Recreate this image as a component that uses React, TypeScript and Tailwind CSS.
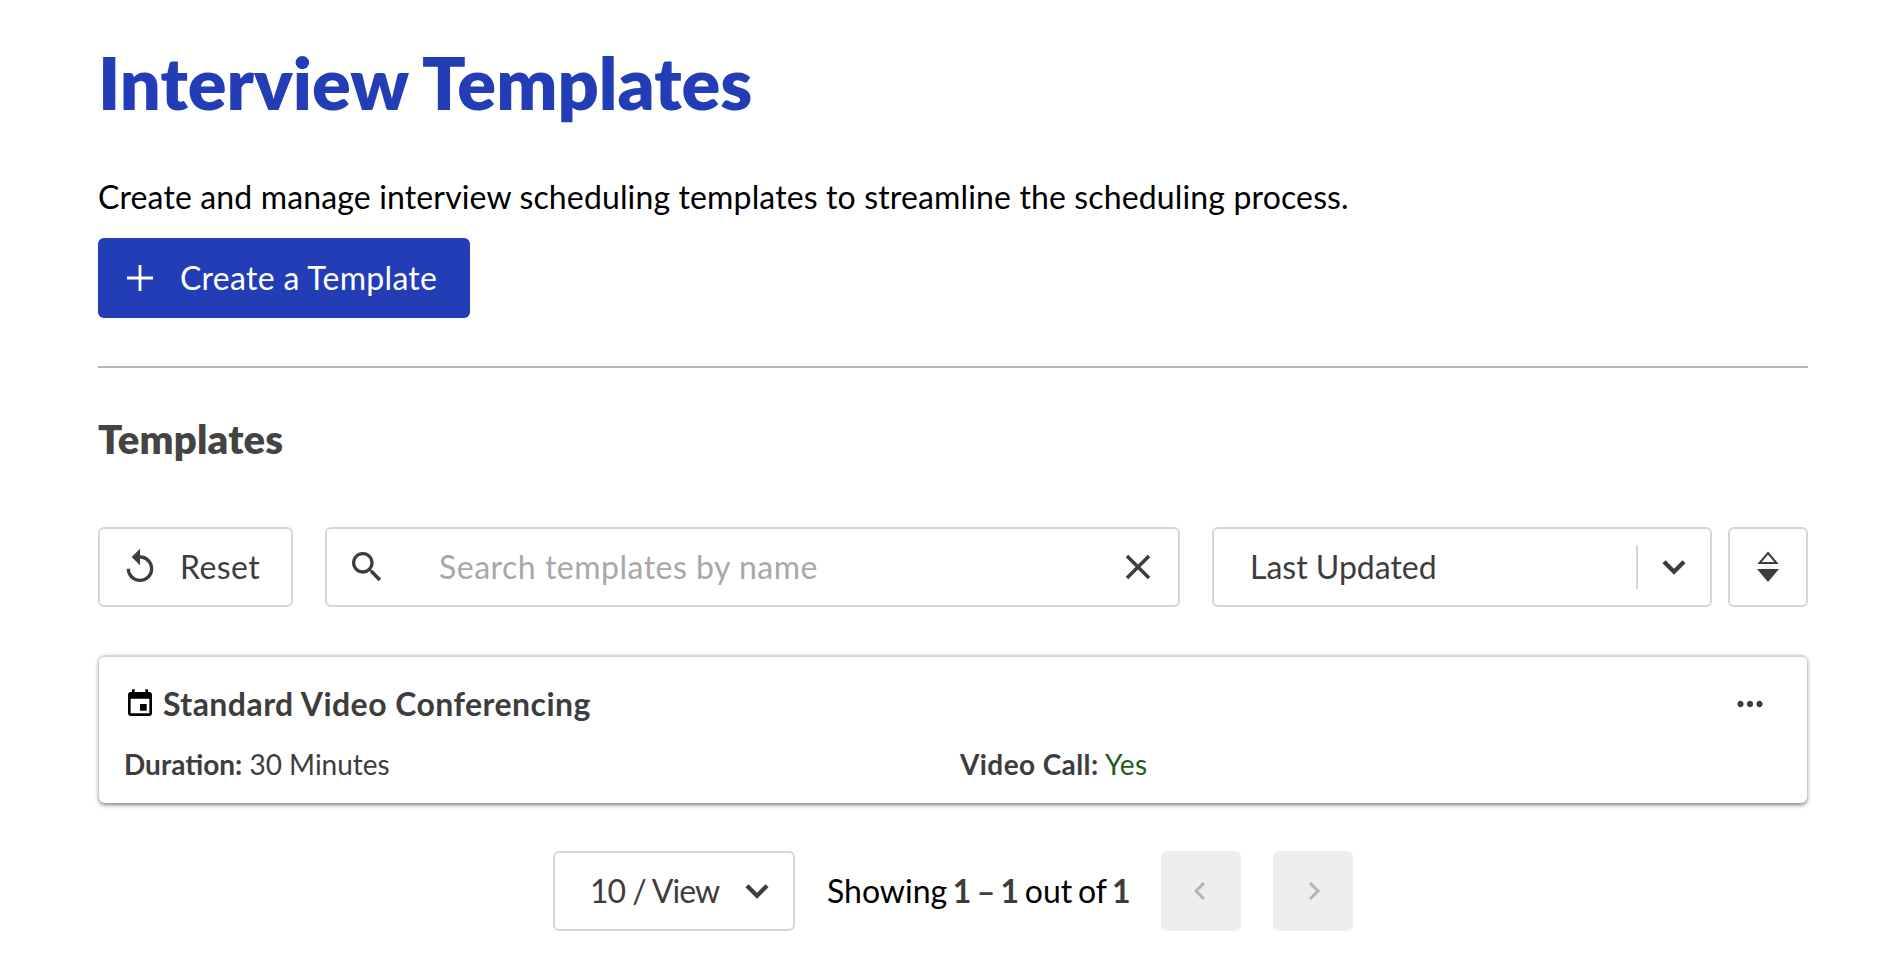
const P = ({ d, className }: { d: string; className: string }) => (
  <svg viewBox="0 0 24 24" fill="currentColor" className={className}><path d={d} /></svg>
);
const Chevron = ({ className }: { className: string }) => (
  <svg viewBox="0 0 24 24" fill="none" stroke="currentColor" strokeWidth="3.2" className={className}><path d="M4.5 8 12 15.5 19.5 8" /></svg>
);

export default function App() {
  return (
    <div className="h-[960px] overflow-hidden bg-white pl-[98px] pr-[80px] pt-[40px] font-['Lato',sans-serif] text-[#3d3d3d]">
      <h1 className="text-[72px] leading-[84px] font-extrabold text-[#233db7]">Interview Templates</h1>
      <p className="mt-[52px] text-[32px] leading-[42px] tracking-[0.14px] text-black">Create and manage interview scheduling templates to streamline the scheduling process.</p>
      <button className="mt-[20px] flex h-[80px] w-[372px] items-center rounded-[6px] bg-[#233db7] pl-[29px] text-[32px] tracking-[0.3px] text-white">
        <svg viewBox="0 0 26 26" fill="none" stroke="currentColor" strokeWidth="2.8" className="h-[26px] w-[26px]"><path d="M13 0v26M0 13h26" /></svg>
        <span className="ml-[27px]">Create a Template</span>
      </button>
      <div className="mt-[48px] h-[2px] bg-[#b5b5b5]" />
      <h2 className="mt-[47px] text-[40px] leading-[48px] font-extrabold tracking-[0.2px] text-[#444444]">Templates</h2>
      <div className="mt-[64px] flex h-[80px] items-stretch">
        <button className="flex w-[195px] items-center rounded-[6px] border-2 border-[#d6d6d6] pl-[20px] text-[32px] tracking-[0.4px]">
          <P d="M12 5V1L7 6l5 5V7c3.31 0 6 2.69 6 6s-2.69 6-6 6-6-2.69-6-6H4c0 4.42 3.58 8 8 8s8-3.58 8-8-3.58-8-8-8z" className="h-[40px] w-[40px]" />
          <span className="ml-[20px]">Reset</span>
        </button>
        <div className="ml-[32px] flex w-[855px] items-center rounded-[6px] border-2 border-[#d6d6d6] pl-[20px] pr-[19px] text-[32px]">
          <P d="M15.5 14h-.79l-.28-.27C15.41 12.59 16 11.11 16 9.5 16 5.91 13.09 3 9.5 3S3 5.91 3 9.5 5.91 16 9.5 16c1.61 0 3.09-.59 4.23-1.57l.27.28v.79l5 4.99L20.49 19l-4.99-5zm-6 0C7.01 14 5 11.99 5 9.5S7.01 5 9.5 5 14 7.01 14 9.5 11.99 14 9.5 14z" className="h-[40px] w-[40px]" />
          <span className="ml-[52px] flex-1 tracking-[0.5px] text-[#a8a8a8]">Search templates by name</span>
          <P d="M19 6.41L17.59 5 12 10.59 6.41 5 5 6.41 10.59 12 5 17.59 6.41 19 12 13.41 17.59 19 19 17.59 13.41 12z" className="h-[42px] w-[42px]" />
        </div>
        <div className="ml-[32px] flex w-[500px] items-center rounded-[6px] border-2 border-[#d6d6d6] pl-[36px] pr-[20px] text-[32px]">
          <span className="flex-1">Last Updated</span>
          <div className="mr-[20px] h-[44px] w-[2px] bg-[#d6d6d6]" />
          <Chevron className="h-[32px] w-[32px]" />
        </div>
        <button className="ml-[16px] flex w-[80px] items-center justify-center rounded-[6px] border-2 border-[#d6d6d6]">
          <svg viewBox="0 0 24 32" className="h-[32px] w-[24px]" fill="none" stroke="#3d3d3d" strokeWidth="2">
            <path d="M12 2 20.500 12H3.500z" />
            <path d="M1 18h22L12 31z" fill="#3d3d3d" stroke="none" />
          </svg>
        </button>
      </div>
      <div className="mx-[1px] mt-[48px] h-[148px] rounded-[6px] border-t-2 border-t-[#d6d6d6] bg-white px-[25px] shadow-[0_2px_4px_rgba(0,0,0,0.5)]">
        <div className="flex items-center pt-[27px]">
          <P d="M17 12h-5v5h5v-5zM16 1v2H8V1H6v2H5c-1.11 0-1.99.9-1.99 2L3 19c0 1.1.89 2 2 2h14c1.1 0 2-.9 2-2V5c0-1.1-.9-2-2-2h-1V1h-2zm3 18H5V8h14v11z" className="h-[32px] w-[32px] text-black" />
          <span className="ml-[7px] flex-1 text-[32px] leading-[40px] font-bold tracking-[0.45px]">Standard Video Conferencing</span>
          <P d="M6 10c-1.1 0-2 .9-2 2s.9 2 2 2 2-.9 2-2-.9-2-2-2zm12 0c-1.1 0-2 .9-2 2s.9 2 2 2 2-.9 2-2-.9-2-2-2zm-6 0c-1.1 0-2 .9-2 2s.9 2 2 2 2-.9 2-2-.9-2-2-2z" className="mr-[13px] h-[38px] w-[38px]" />
        </div>
        <div className="mt-[23px] flex text-[28px] leading-[34px]">
          <div className="w-[836px]"><b>Duration:</b> 30 Minutes</div>
          <div className="tracking-[0.4px]"><b>Video Call:</b> <span className="text-[#1e5c1e]">Yes</span></div>
        </div>
      </div>
      <div className="mt-[48px] flex h-[80px] items-stretch pl-[455px]">
        <div className="flex w-[242px] items-center rounded-[6px] border-2 border-[#d6d6d6] pl-[35px] text-[32px] tracking-[-1px]">
          <span className="flex-1">10 / View</span>
          <Chevron className="mr-[20px] h-[32px] w-[32px]" />
        </div>
        <div className="ml-[32px] flex items-center text-[32px] text-black [word-spacing:-2.5px]">
          <span>Showing <b className="text-[#3d3d3d]">1 – 1</b> out of <b className="text-[#3d3d3d]">1</b></span>
        </div>
        <button className="ml-[30px] flex w-[80px] items-center justify-center rounded-[6px] bg-[#eeeeee] text-[#b5b5b5]">
          <svg viewBox="0 0 24 24" fill="none" stroke="currentColor" strokeWidth="3" className="h-[24px] w-[24px]"><path d="M15 4 7 12l8 8" /></svg>
        </button>
        <button className="ml-[32px] flex w-[80px] items-center justify-center rounded-[6px] bg-[#eeeeee] text-[#b5b5b5]">
          <svg viewBox="0 0 24 24" fill="none" stroke="currentColor" strokeWidth="3" className="h-[24px] w-[24px]"><path d="M9 4l8 8-8 8" /></svg>
        </button>
      </div>
    </div>
  );
}
